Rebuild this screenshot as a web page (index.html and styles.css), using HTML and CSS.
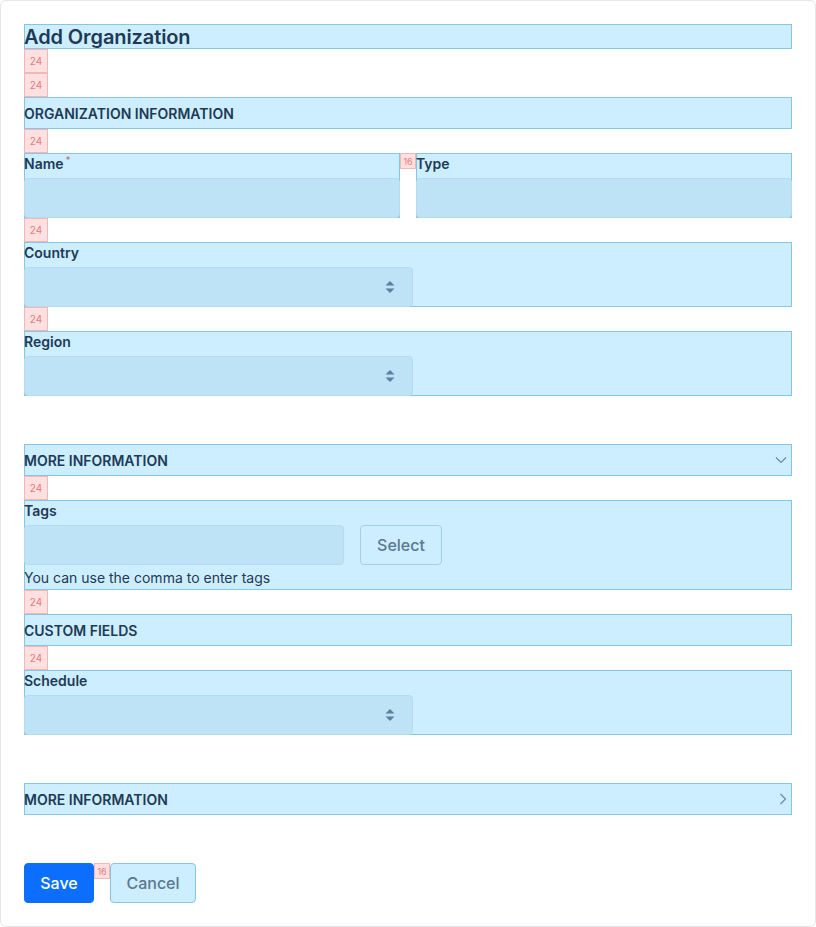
FILE: index.html
```html
<!DOCTYPE html>
<html lang="en">
<head>
<meta charset="utf-8">
<title>Add Organization</title>
<link rel="stylesheet" href="styles.css">
</head>
<body>
<div class="card">
  <h1 class="hl title">Add Organization</h1>
  <div class="sp sp24">24</div>
  <div class="sp sp24">24</div>
  <div class="hl section">ORGANIZATION INFORMATION</div>
  <div class="sp sp24">24</div>
  <div class="row2">
    <div class="hl field">
      <label class="label">Name<span class="req">*</span></label>
      <div class="input"></div>
    </div>
    <div class="sp sp16">16</div>
    <div class="hl field">
      <label class="label">Type</label>
      <div class="input"></div>
    </div>
  </div>
  <div class="sp sp24">24</div>
  <div class="hl field">
    <label class="label">Country</label>
    <div class="input select">
      <svg class="updown" width="10" height="14" viewBox="0 0 10 14"><path d="M5 1 L9.5 5.5 H0.5 Z" fill="#5d7f9c"/><path d="M5 13 L9.5 8.5 H0.5 Z" fill="#5d7f9c"/></svg>
    </div>
  </div>
  <div class="sp sp24">24</div>
  <div class="hl field">
    <label class="label">Region</label>
    <div class="input select">
      <svg class="updown" width="10" height="14" viewBox="0 0 10 14"><path d="M5 1 L9.5 5.5 H0.5 Z" fill="#5d7f9c"/><path d="M5 13 L9.5 8.5 H0.5 Z" fill="#5d7f9c"/></svg>
    </div>
  </div>
  <div class="gap48"></div>
  <div class="hl section">
    <span>MORE INFORMATION</span>
    <svg class="chev" width="12" height="8" viewBox="0 0 12 8"><path d="M1 1.5 L6 6.5 L11 1.5" fill="none" stroke="#6a89a4" stroke-width="1.2"/></svg>
  </div>
  <div class="sp sp24">24</div>
  <div class="hl field tags">
    <label class="label">Tags</label>
    <div class="tagrow">
      <div class="input tagin"></div>
      <button class="btn outline">Select</button>
    </div>
    <div class="help">You can use the comma to enter tags</div>
  </div>
  <div class="sp sp24">24</div>
  <div class="hl section">CUSTOM FIELDS</div>
  <div class="sp sp24">24</div>
  <div class="hl field">
    <label class="label">Schedule</label>
    <div class="input select">
      <svg class="updown" width="10" height="14" viewBox="0 0 10 14"><path d="M5 1 L9.5 5.5 H0.5 Z" fill="#5d7f9c"/><path d="M5 13 L9.5 8.5 H0.5 Z" fill="#5d7f9c"/></svg>
    </div>
  </div>
  <div class="gap48"></div>
  <div class="hl section">
    <span>MORE INFORMATION</span>
    <svg class="chev" width="8" height="12" viewBox="0 0 8 12"><path d="M1.5 1 L6.5 6 L1.5 11" fill="none" stroke="#6a89a4" stroke-width="1.2"/></svg>
  </div>
  <div class="gap48"></div>
  <div class="actions">
    <button class="btn primary">Save</button>
    <div class="sp sp16">16</div>
    <button class="btn outline cancel">Cancel</button>
  </div>
</div>
</body>
</html>
```
FILE: styles.css
```css
* { box-sizing: border-box; }
html, body { margin: 0; padding: 0; background: #ffffff; }
body {
  font-family: Inter, "Noto Sans", "Liberation Sans", sans-serif;
  color: #1e3a56;
}
.card {
  width: 816px;
  border: 1px solid #e4e6ea;
  border-radius: 6px;
  padding: 23px;
  background: #fff;
}
.hl {
  background: #cdeefe;
  border: 1px solid #86c6e2;
}
.title {
  margin: 0;
  height: 25px;
  font-size: 20px;
  font-weight: 600;
  line-height: 24px;
  letter-spacing: -0.1px;
  text-indent: -1px;
}
.sp {
  background: #ffe0e0;
  border: 1px solid #f5b6b6;
  color: #e97a7a;
  display: flex;
  align-items: center;
  justify-content: center;
  font-size: 10px;
  line-height: 1;
}
.sp24 { width: 24px; height: 24px; }
.sp16 { width: 16px; height: 16px; font-size: 9px; }
.section {
  height: 32px;
  display: flex;
  align-items: center;
  justify-content: space-between;
  font-size: 14px;
  font-weight: 600;
  padding-right: 4px;
}
.section > span, .section { text-indent: -1px; }
.chev { display: block; }
.row2 {
  display: grid;
  grid-template-columns: 1fr 16px 1fr;
  align-items: start;
}
.field {
  display: flex;
  flex-direction: column;
  height: 65px;
}
.label {
  height: 24px;
  font-size: 14px;
  font-weight: 600;
  line-height: 19px;
  display: flex;
  align-items: flex-start;
  margin-left: -1px;
}
.req {
  color: #b77878;
  font-size: 10px;
  line-height: 12px;
  margin-left: 2px;
  font-weight: 400;
}
.input {
  height: 40px;
  background: #bfe3f6;
  border: 1px solid #b4dbf0;
  border-radius: 4px;
}
.field > .input:not(.select) { margin: 0 -1px -1px -1px; }
.select {
  width: 389px;
  display: flex;
  align-items: center;
  justify-content: flex-end;
  padding-right: 17px;
  margin-left: -1px;
  margin-bottom: -1px;
}
.updown { display: block; }
.gap48 { height: 48px; }
.tags { height: 90px; }
.tagrow {
  display: flex;
  gap: 16px;
  align-items: center;
}
.tagin { width: 320px; margin-left: -1px; }
.btn {
  font-family: Inter, "Noto Sans", "Liberation Sans", sans-serif;
  font-size: 16px;
  font-weight: 500;
  height: 40px;
  border-radius: 4px;
  padding: 0 15px;
  cursor: pointer;
}
.outline {
  background: #cdeefe;
  border: 1px solid #a3cfe6;
  color: #5b7791;
}
.tagrow .outline { width: 82px; }
.help {
  font-size: 14px;
  line-height: 26px;
  color: #1e3a56;
  height: 24px;
  margin-left: -1px;
}
.actions {
  display: flex;
  align-items: flex-start;
}
.primary {
  background: #0b6efd;
  border: 1px solid #0b6efd;
  color: #fff;
  width: 70px;
}
.cancel {
  width: 86px;
  border-color: #86c6e2;
}
```
